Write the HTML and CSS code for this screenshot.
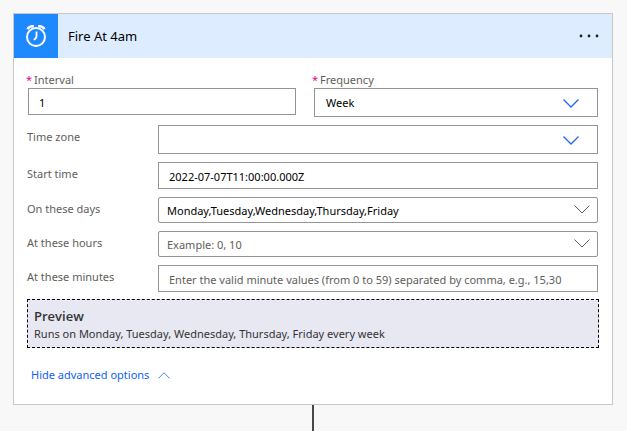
FILE: index.html
```html
<!DOCTYPE html>
<html lang="en">
<head>
<meta charset="utf-8">
<meta name="viewport" content="width=device-width, initial-scale=1">
<title>Fire At 4am</title>
<link rel="stylesheet" href="styles.css">
</head>
<body>
<main class="flow">
  <section class="card">
    <header class="card-header">
      <span class="card-icon">
        <svg width="44" height="44" viewBox="0 0 44 44" fill="none" stroke="#fff" aria-hidden="true">
          <circle cx="22" cy="23" r="9" stroke-width="2"/>
          <path d="M22.500 17.500v4.500c0 1.700-.8 2.900-2.800 3.800" stroke-width="1.800"/>
          <path d="M13.600 15.300c.8-2 3.400-3.500 6.200-2.900M30.400 15.300c-.8-2-3.400-3.500-6.200-2.900" stroke-width="2.600"/>
        </svg>
      </span>
      <h1 class="card-title">Fire At 4am</h1>
      <button class="menu-button" type="button" aria-label="Menu">
        <svg width="20" height="4" viewBox="0 0 20 4" fill="#222" aria-hidden="true">
          <circle cx="2" cy="2" r="1.400"/><circle cx="10" cy="2" r="1.400"/><circle cx="18" cy="2" r="1.400"/>
        </svg>
      </button>
    </header>

    <form class="card-body">
      <div class="pair">
        <div class="stacked">
          <label class="label" for="interval"><span class="required">*</span>Interval</label>
          <input class="field" id="interval" type="text" value="1">
        </div>
        <div class="stacked">
          <label class="label" for="frequency"><span class="required">*</span>Frequency</label>
          <div class="dropdown">
            <select class="field field-tall" id="frequency"><option>Week</option></select>
            <svg class="chevron" viewBox="0 0 16 9" aria-hidden="true"><path d="M.5.5 8 8 15.500.5"/></svg>
          </div>
        </div>
      </div>

      <div class="rows">
        <label class="label row-label" for="timezone">Time zone</label>
        <div class="dropdown">
          <select class="field field-tall" id="timezone"><option></option></select>
          <svg class="chevron" viewBox="0 0 16 9" aria-hidden="true"><path d="M.5.5 8 8 15.500.5"/></svg>
        </div>

        <label class="label row-label" for="start">Start time</label>
        <input class="field" id="start" type="text" value="2022-07-07T11:00:00.000Z">

        <label class="label row-label" for="days">On these days</label>
        <div class="dropdown dropdown-plain">
          <select class="field field-combo" id="days"><option>Monday,Tuesday,Wednesday,Thursday,Friday</option></select>
          <svg class="chevron" viewBox="0 0 16 9" aria-hidden="true"><path d="M.5.5 8 8 15.500.5"/></svg>
        </div>

        <label class="label row-label" for="hours">At these hours</label>
        <div class="dropdown dropdown-plain">
          <select class="field field-combo field-empty" id="hours"><option>Example: 0, 10</option></select>
          <svg class="chevron" viewBox="0 0 16 9" aria-hidden="true"><path d="M.5.5 8 8 15.500.5"/></svg>
        </div>

        <label class="label row-label" for="minutes">At these minutes</label>
        <input class="field" id="minutes" type="text" placeholder="Enter the valid minute values (from 0 to 59) separated by comma, e.g., 15,30">
      </div>

      <section class="preview">
        <h2 class="preview-title">Preview</h2>
        <p class="preview-text">Runs on Monday, Tuesday, Wednesday, Thursday, Friday every week</p>
      </section>

      <a class="advanced" href="#">Hide advanced options
        <svg width="12" height="7" viewBox="0 0 12 7" fill="none" stroke="currentColor" stroke-width=".8" aria-hidden="true"><path d="M.3 6.500 6 .8l5.700 5.700"/></svg>
      </a>
    </form>
  </section>
  <div class="connector"></div>
</main>
</body>
</html>
```
FILE: styles.css
```css
* {
  box-sizing: border-box;
}

body {
  margin: 0;
  background: #f8f8f8;
  color: #000;
  font-family: "Segoe UI", "Noto Sans", "Open Sans", sans-serif;
  font-size: 11px;
  line-height: 16px;
}

.flow {
  display: flex;
  flex-direction: column;
  min-height: 100vh;
  padding: 13px 14px 0 13px;
}

.card {
  border: 1px solid #c8c8c8;
  background: #fff;
}

.card-header {
  display: flex;
  align-items: center;
  background: #deecff;
}

.card-icon {
  display: flex;
  background: #1e88ff;
}

.card-title {
  flex: 1;
  margin: 0;
  padding-left: 10px;
  font-size: 13px;
  font-weight: 400;
  line-height: 20px;
}

.menu-button {
  display: flex;
  padding: 8px 13px;
  border: 0;
  background: none;
}

.card-body {
  padding: 14px 13px 21px;
}

.pair {
  display: grid;
  grid-template-columns: 268fr 284fr;
  gap: 18px;
  align-items: start;
  padding: 0 1px;
}

.stacked {
  display: flex;
  flex-direction: column;
}

.label {
  color: #605e5c;
}

.required {
  margin: 0 2px 0 -2px;
  color: #e3008c;
}

.rows {
  display: grid;
  grid-template-columns: 131px 1fr;
  gap: 8px 0;
  padding: 8px 1px 7px 0;
}

.row-label {
  padding-top: 4px;
}

.field {
  display: block;
  width: 100%;
  height: 27px;
  margin: 0;
  padding: 2px 10px 0;
  border: 1px solid #949494;
  border-radius: 0;
  background: #fff;
  color: #000;
  font: inherit;
  appearance: none;
}

.field::placeholder,
.field-empty {
  color: #605e5c;
}

.field-tall {
  height: 29px;
  padding: 0 11px;
}

.field-combo {
  height: 26px;
  padding: 2px 8px 0;
  border-radius: 2px;
}

.dropdown {
  position: relative;
  color: #2266f0;
}

.dropdown-plain {
  color: #605c70;
}

.chevron {
  position: absolute;
  top: 11px;
  right: 19px;
  width: 16px;
  height: 9px;
  fill: none;
  stroke: currentColor;
  stroke-width: 1.3;
  pointer-events: none;
}

.dropdown-plain .chevron {
  top: 8px;
  right: 8px;
  stroke-width: 1;
}

.preview {
  padding: 7px 6px 5px;
  border: 1px dashed #000;
  background: #e8e8f3;
  color: #333;
}

.preview-title {
  margin: 0;
  font-family: "Segoe UI", "Open Sans", sans-serif;
  font-size: 13px;
  font-weight: 600;
  line-height: 18px;
}

.preview-text {
  margin: 0;
  line-height: 17px;
}

.advanced {
  display: inline-flex;
  align-items: center;
  gap: 9px;
  margin: 19px 0 0 4px;
  color: #0f62fe;
  text-decoration: none;
}

.connector {
  flex: 1;
  align-self: center;
  width: 2px;
  background: #484848;
}
```
